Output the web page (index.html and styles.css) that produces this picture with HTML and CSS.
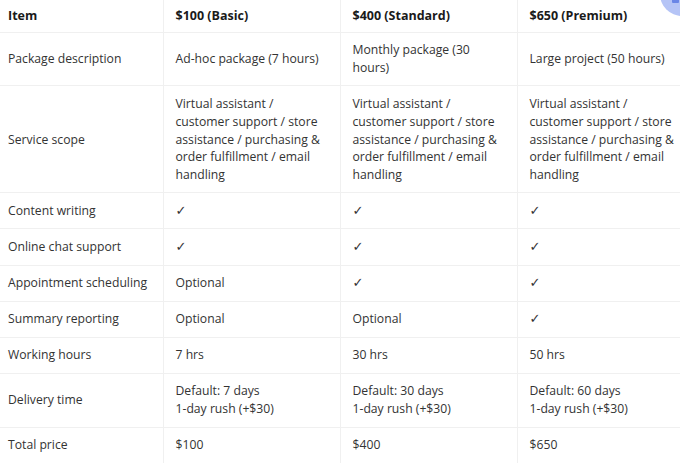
FILE: index.html
```
<!DOCTYPE html>
<html>
<head>
<meta charset="utf-8">
<link rel="stylesheet" href="styles.css">
</head>
<body>
<div class="page">
<table class="pricing">
  <colgroup>
    <col class="c1"><col class="c2"><col class="c3"><col class="c4">
  </colgroup>
  <thead>
    <tr><th>Item</th><th>$100 (Basic)</th><th>$400 (Standard)</th><th>$650 (Premium)</th></tr>
  </thead>
  <tbody>
    <tr><td>Package description</td><td>Ad-hoc package (7 hours)</td><td>Monthly package (30 hours)</td><td>Large project (50 hours)</td></tr>
    <tr><td>Service scope</td><td>Virtual assistant / customer support / store assistance / purchasing &amp; order fulfillment / email handling</td><td>Virtual assistant / customer support / store assistance / purchasing &amp; order fulfillment / email handling</td><td>Virtual assistant / customer support / store assistance / purchasing &amp; order fulfillment / email handling</td></tr>
    <tr><td>Content writing</td><td><span class="check">✓</span></td><td><span class="check">✓</span></td><td><span class="check">✓</span></td></tr>
    <tr><td>Online chat support</td><td><span class="check">✓</span></td><td><span class="check">✓</span></td><td><span class="check">✓</span></td></tr>
    <tr><td>Appointment scheduling</td><td>Optional</td><td><span class="check">✓</span></td><td><span class="check">✓</span></td></tr>
    <tr><td>Summary reporting</td><td>Optional</td><td>Optional</td><td><span class="check">✓</span></td></tr>
    <tr><td>Working hours</td><td>7 hrs</td><td>30 hrs</td><td>50 hrs</td></tr>
    <tr><td>Delivery time</td><td>Default: 7 days<br>1-day rush (+$30)</td><td>Default: 30 days<br>1-day rush (+$30)</td><td>Default: 60 days<br>1-day rush (+$30)</td></tr>
    <tr><td>Total price</td><td>$100</td><td>$400</td><td>$650</td></tr>
  </tbody>
</table>
<div class="fab"><span class="fab-icon"></span></div>
</div>
</body>
</html>
```
FILE: styles.css
```
html, body {
  margin: 0;
  padding: 0;
  background: #ffffff;
}
.page {
  position: relative;
  width: 680px;
  height: 463px;
  overflow: hidden;
  font-family: "Open Sans", "Noto Sans", sans-serif;
  font-size: 12.2px;
  color: #333333;
}
.pricing {
  width: 698px;
  margin-left: -4px;
  border-collapse: collapse;
  table-layout: fixed;
}
.c1 { width: 167px; }
.c2 { width: 177px; }
.c3 { width: 177px; }
.c4 { width: 177px; }
.pricing th,
.pricing td {
  text-align: left;
  vertical-align: middle;
  padding: 8.7px 12px;
  line-height: 17.7px;
  border: 1px solid #f0f0f0;
}
.pricing tr:first-child th,
.pricing tbody tr:first-child td { border-top: none; }
.pricing th:first-child,
.pricing td:first-child { border-left: none; }
.pricing th:last-child,
.pricing td:last-child { border-right: none; }
.pricing tbody tr:last-child td { border-bottom: none; }
.pricing th {
  font-weight: 700;
  font-size: 12.5px;
  color: #1a1a1a;
  padding-top: 7px;
  padding-bottom: 7px;
}
.check {
  font-family: "DejaVu Sans", sans-serif;
  font-size: 13px;
  line-height: 1;
  color: #333333;
}
.fab {
  position: absolute;
  left: 660px;
  top: -28px;
  width: 44px;
  height: 44px;
  border-radius: 50%;
  background: #b5c4f6;
}
.fab-icon {
  position: absolute;
  left: 12px;
  top: 26px;
  width: 7px;
  height: 5px;
  border-radius: 1px;
  background: #6a86e6;
}
```
